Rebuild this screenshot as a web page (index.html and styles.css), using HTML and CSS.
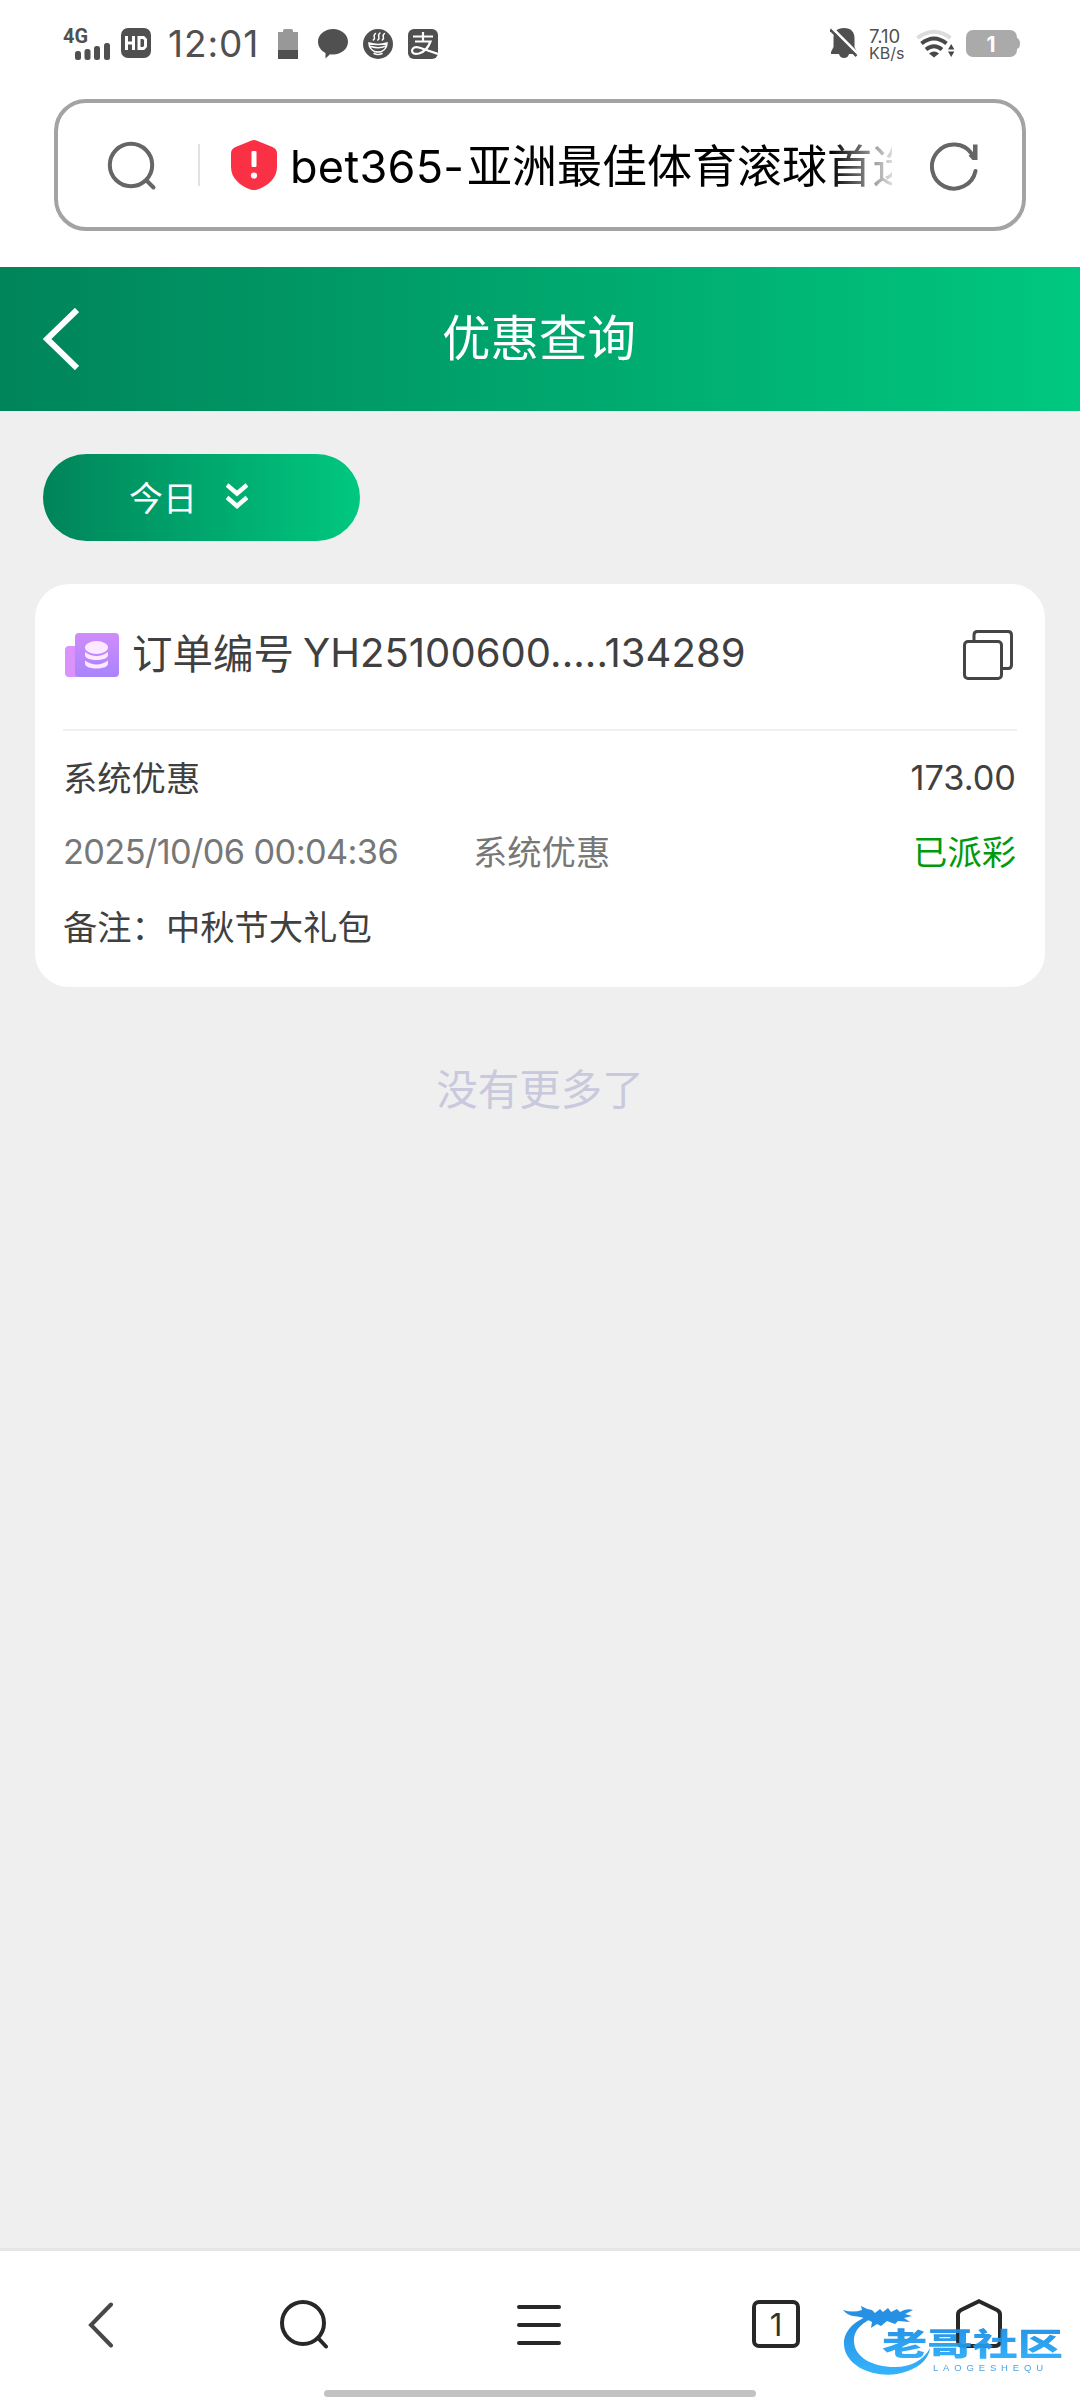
FILE: index.html
```html
<!DOCTYPE html>
<html lang="zh-CN">
<head>
<meta charset="utf-8">
<title>优惠查询</title>
<link rel="stylesheet" href="styles.css">
</head>
<body>
<div class="screen">
  <div class="status">
    <svg class="signal" width="48" height="32" viewBox="0 0 48 32">
      <text class="net" x="0" y="15" textLength="25" lengthAdjust="spacingAndGlyphs">4G</text>
      <g fill="#505050"><rect x="12" y="23" width="6" height="9" rx="2.5"/><rect x="21.500" y="21" width="6" height="11" rx="2.500"/><rect x="31" y="18" width="6" height="14" rx="2.500"/><rect x="41" y="15" width="6" height="17" rx="2.500"/></g>
    </svg>
    <svg class="hd" width="30" height="30" viewBox="0 0 30 30"><rect width="30" height="30" rx="7" fill="#505050"/><path d="M5.500 8v14M12.500 8v14M5.500 15h7M18 9.500h4.500l2 2v7l-2 2H18z" fill="none" stroke="#fff" stroke-width="3"/></svg>
    <span class="clock">12:01</span>
    <svg class="batt" width="20" height="30" viewBox="0 0 20 30"><path d="M0 3h5V2q0-2 2-2h6q2 0 2 2v1h5v18H0z" fill="#989898"/><path d="M0 21h20v9H0z" fill="#505050"/></svg>
    <svg class="chat" width="30" height="30" viewBox="0 0 30 30"><path d="M15 0c8.300 0 15 5.600 15 12.700S23.300 25.500 15 25.500q-1.500 0-3-.3L7.500 29.500V24C3 21.600 0 17.500 0 12.700 0 5.600 6.700 0 15 0z" fill="#505050"/></svg>
    <svg class="bowl" width="30" height="30" viewBox="0 0 30 30"><circle cx="15" cy="15" r="15" fill="#505050"/><g fill="none" stroke="#fff" stroke-width="1.500" stroke-linecap="round"><path d="M12.500 4.500q-2 1.500-1.200 3.200t-1 3.300M17 4q-2 1.500-1.200 3.500t-1 3.500M21.500 4.500q-2 1.500-1.200 3.200t-1 3.300"/><path d="M6 14q9 3 18 0c0 4-2.500 7-5.500 8.500q-3.500 1-7 0C8.500 21 6 18 6 14zM8 17.500q8 2.500 15-.5M11 24.500q4 2 8 0"/></g></svg>
    <svg class="zhi" width="30" height="30" viewBox="0 0 30 30"><rect width="30" height="30" rx="6" fill="#505050"/><g fill="none" stroke="#fff" stroke-width="2.200"><path d="M5 7.500h20M15 3v9M7 12.500h15.500Q19 22 11 24.500 4 26 4 21.500 5 17 11 18.500L30 25"/></g></svg>
    <svg class="bell" width="28" height="31" viewBox="0 0 28 31"><path d="M14 0c7 0 10.500 4 10.500 10v9l2.500 5v2h-8q-1 4-5 4t-5-4H1v-2l2.500-5v-9C3.500 4 7 0 14 0z" fill="#505050"/><path d="M1 -1L29 27" stroke="#fff" stroke-width="3"/><path d="M0 1.500L26.500 28" stroke="#505050" stroke-width="2.500"/></svg>
    <div class="speed"><span class="rate">7.10</span><span class="unit">KB/s</span></div>
    <svg class="wifi" width="40" height="30" viewBox="0 0 40 30"><g fill="none"><path d="M1.500 9Q18 -3.500 34.500 9" stroke="#dcdcdc" stroke-width="4"/><path d="M5.500 14.500Q18 4.500 30.500 14.500M10 20.500Q18 14 26 20.500" stroke="#484848" stroke-width="4"/></g><path d="M13 24.500q5-4 10 0L18 28.500z" fill="#484848"/><path d="M32 20.500l3.200-5.500 3.200 5.500zM32 22.500h6.400L35.200 28z" fill="#484848"/></svg>
    <svg class="power" width="55" height="28" viewBox="0 0 55 28"><rect width="51" height="27" rx="7" fill="#aaa"/><path d="M51 8q3 1 3 5.500T51 19z" fill="#aaa"/><text class="level" x="25" y="21.500">1</text></svg>
  </div>

  <div class="address-bar">
    <div class="address">
      <svg class="find" width="50" height="50" viewBox="0 0 50 50" fill="none" stroke="#666" stroke-width="4" stroke-linecap="round"><circle cx="24" cy="24" r="21.200"/><path d="M39.500 39.500l7 7"/></svg>
      <i class="sep"></i>
      <svg class="shield" width="46" height="50" viewBox="0 0 46 50"><path d="M20 .7q3-1.200 6 0l16 6.500q4 2 4 6V27c0 11-9 19-19.500 22.500q-3.500 1-7 0C9 46 0 38 0 27V13.200q0-4 4-6z" fill="#fa3044"/><rect x="20.500" y="11" width="5" height="16" rx="1" fill="#fff"/><circle cx="23" cy="35.500" r="3.100" fill="#fff"/></svg>
      <div class="page-name"><span class="host">bet365-</span>亚洲最佳体育滚球首选</div>
      <svg class="reload" width="50" height="52" viewBox="0 0 50 52" fill="none" stroke="#666" stroke-width="4"><path d="M45.500 31A22 22 0 1 1 42 14" stroke-linecap="round"/><path d="M47.500 4.500v15.500h-5l-4-4.500 4.500-2V4.500z" fill="#666" stroke="none"/></svg>
    </div>
  </div>

  <div class="topbar">
    <svg class="prev" width="36" height="62" viewBox="0 0 36 62" fill="none" stroke="#fff" stroke-width="6"><path d="M34 2L4 31l30 29"/></svg>
    <h1>优惠查询</h1>
  </div>

  <div class="content">
    <div class="range"><span>今日</span><svg width="22" height="26" viewBox="0 0 22 26" fill="none" stroke="#fff" stroke-width="4.400"><path d="M1 2l10 8.500L21 2M1 14.500L11 23l10-8.500"/></svg></div>

    <div class="card">
      <div class="order">
        <svg class="coin" width="54" height="45" viewBox="0 0 54 45"><defs><linearGradient id="a" x1="0" y1="0" x2="0" y2="1"><stop offset="0" stop-color="#cf8cfb"/><stop offset="1" stop-color="#a984fb"/></linearGradient></defs><path d="M4 13h12v31H4q-4 0-4-4V17q0-4 4-4z" fill="#db93fb"/><rect x="10" width="44" height="44" rx="4" fill="url(#a)"/><g fill="#fde8ff"><ellipse cx="31.500" cy="14.500" rx="11.500" ry="6.500"/><path d="M20 19q11.500 8 23 0v3.500c-1 6-22 6-23 0zM20 27.500q11.500 8 23 0V31c-1 6-22 6-23 0z"/></g></svg>
        <span class="label">订单编号</span><span class="code">YH25100600.....134289</span>
        <svg class="copy" width="50" height="50" viewBox="0 0 50 50" fill="none" stroke="#454545" stroke-width="3"><rect x="1.500" y="11.500" width="37" height="37" rx="3.500"/><path d="M11 11V5q0-3.500 3.500-3.500H45q3.500 0 3.500 3.500v30q0 3.500-3.500 3.500h-6"/></svg>
      </div>
      <div class="row"><span class="cn">系统优惠</span><span class="amount">173.00</span></div>
      <div class="row grey"><span class="date">2025/10/06 00:04:36</span><span class="cn">系统优惠</span><span class="cn paid">已派彩</span></div>
      <div class="row"><span class="cn">备注：中秋节大礼包</span></div>
    </div>
    <div class="end">没有更多了</div>
  </div>

  <div class="toolbar">
    <svg class="t-back" width="26" height="46" viewBox="0 0 26 46" fill="none" stroke="#484848" stroke-width="4" stroke-linecap="round"><path d="M23 2.500L3 23l20 20.500"/></svg>
    <svg class="t-find" width="50" height="50" viewBox="0 0 50 50" fill="none" stroke="#282828" stroke-width="4" stroke-linecap="round"><circle cx="24" cy="24" r="21"/><path d="M39 39l8 8.500"/></svg>
    <svg class="t-menu" width="46" height="42" viewBox="0 0 46 42" stroke="#282828" stroke-width="4" stroke-linecap="round"><path d="M3 3h40M3 21h40M3 39h40"/></svg>
    <span class="tabs">1</span>
    <svg class="t-home" width="46" height="49" viewBox="0 0 46 49" fill="none" stroke="#282828" stroke-width="4"><path d="M23 2.300L41 11q3 1.500 3 4.500V42q0 5-5 5H7q-5 0-5-5V15.500Q2 12.500 5 11z"/></svg>
    <i class="handle"></i>
    <svg class="mark" width="224" height="74" viewBox="0 0 224 74">
      <defs><linearGradient id="b" x1="0" y1="0" x2="0" y2="1"><stop offset="0" stop-color="#1583df"/><stop offset="1" stop-color="#27aefc"/></linearGradient></defs>
      <path d="M30 11C12 16 1 28 2 41c2 25 39 36 64 26 13-5 21-13 22-23-6 12-19 19-35 19C30 63 13 53 12 38 11 27 19 18 36 12z" fill="url(#b)"/>
      <path d="M1 6q10 3 19 0l-1-4q5 3 11 4l3 3 5-4 3 3 5-4 3 4 6-3 3 3q6-4 13-2l-8 4 7 2-8 2 6 4-12-1-3 3-8-3-6 5-4-2-6 4 1-6q-10-6-19-6-6-1-10-6z" fill="#1688e2"/>
      <text class="mark-cn" x="40" y="50.500" textLength="181" lengthAdjust="spacingAndGlyphs">老哥社区</text>
      <text class="mark-en" x="91" y="67" textLength="110">LAOGESHEQU</text>
    </svg>
  </div>
</div>
</body>
</html>
```
FILE: styles.css
```css
* { box-sizing: border-box; }
body { margin: 0; background: #efefef; }
.screen {
  width: 1080px; height: 2400px; display: flex; flex-direction: column;
  font-family: Inter, "Noto Sans CJK SC", sans-serif; color: #404040; overflow: hidden;
}
svg { display: block; flex: none; }

.status { flex: none; height: 99px; padding: 28px 0 0 63px; display: flex; align-items: flex-start; background: #fff; }
.signal { overflow: visible; }
.net { font: 700 20px Roboto, sans-serif; fill: #505050; }
.hd { margin-left: 10px; }
.clock { width: 92px; margin-left: 17px; font-size: 37px; line-height: 31px; letter-spacing: .9px; color: #505050; }
.batt { margin: 1px 0 0 18px; }
.chat { margin: 1px 0 0 20px; }
.bowl, .zhi { margin: 1px 0 0 15px; }
.bell { margin-left: 392px; }
.speed { width: 36px; margin: 0 0 0 11px; display: flex; flex-direction: column; line-height: 17px; color: #505050; }
.rate { font-size: 18.500px; }
.unit { font-size: 16px; }
.wifi { margin: 1px 0 0 11px; }
.power { margin: 2px 0 0 10px; }
.level { font: 700 21px Inter, sans-serif; fill: #fff; text-anchor: middle; }

.address-bar { flex: none; height: 168px; padding: 0 54px 36px; background: #fff; }
.address { height: 132px; border: 4px solid #a3a3a3; border-radius: 32px; display: flex; align-items: center; }
.find { margin: 1px 0 0 49px; }
.sep { width: 2px; height: 42px; margin-left: 41px; background: #e2e2e2; }
.shield { margin-left: 31px; }
.page-name {
  width: 602px; margin: 3px 0 0 13px; overflow: hidden; white-space: nowrap; font-size: 45px; line-height: 66px; color: #000;
  -webkit-mask-image: linear-gradient(90deg, #000 540px, transparent 612px);
  mask-image: linear-gradient(90deg, #000 540px, transparent 612px);
}
.host { display: inline-block; width: 177px; letter-spacing: .3px; }
.reload { margin: 2px 0 0 38px; }

.topbar {
  flex: none; height: 144px; padding: 0 43px;
  display: grid; grid-template-columns: 36px 1fr 36px; align-items: center;
  background: linear-gradient(90deg, #00845a, #00c880);
}
.topbar h1 { margin: 0 0 1px -2px; text-align: center; font-size: 48.500px; font-weight: 400; line-height: 70px; color: #fff; }

.content { flex: 1; padding: 43px 35px 0; background: #efefef; }
.range {
  width: 317px; height: 87px; margin-left: 8px; padding: 0 0 3px 86px; border-radius: 44px; display: flex; align-items: center;
  gap: 29px; font-size: 34px; color: #fff; background: linear-gradient(90deg, #00845a, #00c880);
}
.card { height: 403px; margin-top: 43px; padding: 0 28px; border-radius: 34px; background: #fff; }
.order { height: 147px; margin-bottom: 9px; padding-bottom: 5px; display: flex; align-items: center; border-bottom: 2px solid #f0f0f0; font-size: 40px; }
.coin { margin: 3px 0 0 2px; }
.label { margin: 0 0 5px 13px; font-size: 40.500px; }
.code { margin: 0 0 3px 9px; letter-spacing: .05px; }
.copy { margin: 2px 4px 0 auto; }
.row { height: 74.500px; padding: 0 1px 0 0; display: flex; align-items: center; font-size: 34.300px; }
.cn { margin-bottom: 3px; }
.amount { margin-left: auto; }
.grey { color: #777; }
.date { width: 410px; letter-spacing: -.6px; }
.paid { margin-left: auto; color: #009a0d; }
.end { margin-top: 73px; text-align: center; font-size: 41.500px; line-height: 60px; color: #c8c9dc; }

.toolbar { position: relative; flex: none; height: 152px; padding: 50px 0 0 88px; border-top: 3px solid #e5e5e5; display: flex; align-items: flex-start; background: #fff; }
.t-back { margin-top: 1px; }
.t-find { margin: -2px 0 0 165px; }
.t-menu { margin: 3px 0 0 187px; }
.tabs {
  width: 48px; height: 48px; margin: -1px 0 0 190px; border: 4px solid #282828; border-radius: 7px;
  font-size: 31px; line-height: 41px; text-align: center; color: #333;
}
.t-home { margin: -2px 0 0 156px; }
.handle { position: absolute; left: 324px; top: 139px; width: 432px; height: 7px; border-radius: 4px; background: #c2c2c2; }
.mark { position: absolute; left: 842px; top: 53px; opacity: .93; }
.mark-cn { font: 900 31px "Noto Sans CJK SC", sans-serif; fill: url(#b); }
.mark-en { font: 400 9.500px "Liberation Sans", sans-serif; fill: #3d9ee6; }
```
